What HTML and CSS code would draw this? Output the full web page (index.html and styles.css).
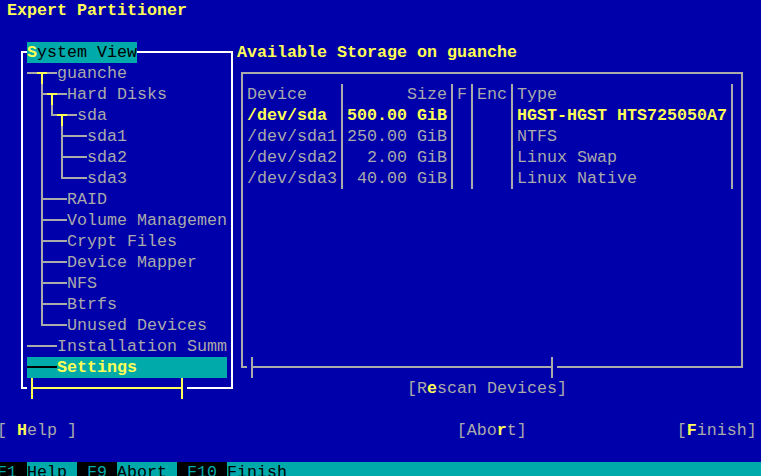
FILE: index.html
```html
<!DOCTYPE html>
<html lang="en">
<head>
<meta charset="utf-8">
<title>Expert Partitioner</title>
<link rel="stylesheet" href="styles.css">
</head>
<body>
<div class="screen">
<div class="row"><span class="c1"></span><b class="y">Expert Partitioner</b></div>
<div class="row"></div>
<div class="main">
<div class="left">
<div class="row"><span class="ind"></span><i class="b tl w"></i><span class="lc"><span class="hl"><b class="y">S</b>ystem View</span><i class="b h w fill"></i></span><i class="b tr w"></i></div>
<div class="row"><span class="ind"></span><i class="b v w"></i><span class="lc"><i class="b h g"></i><i class="b td y"></i><i class="b h g"></i>guanche</span><i class="b v w"></i></div>
<div class="row"><span class="ind"></span><i class="b v w"></i><span class="lc"><span class="c1"></span><i class="b lt g"></i><i class="b td y"></i><i class="b h g"></i>Hard Disks</span><i class="b v w"></i></div>
<div class="row"><span class="ind"></span><i class="b v w"></i><span class="lc"><span class="c1"></span><i class="b v g"></i><i class="b bl g"></i><i class="b td y"></i><i class="b h g"></i>sda</span><i class="b v w"></i></div>
<div class="row"><span class="ind"></span><i class="b v w"></i><span class="lc"><span class="c1"></span><i class="b v g"></i><span class="c1"></span><i class="b lt g"></i><i class="b h g"></i><i class="b h g"></i>sda1</span><i class="b v w"></i></div>
<div class="row"><span class="ind"></span><i class="b v w"></i><span class="lc"><span class="c1"></span><i class="b v g"></i><span class="c1"></span><i class="b lt g"></i><i class="b h g"></i><i class="b h g"></i>sda2</span><i class="b v w"></i></div>
<div class="row"><span class="ind"></span><i class="b v w"></i><span class="lc"><span class="c1"></span><i class="b v g"></i><span class="c1"></span><i class="b bl g"></i><i class="b h g"></i><i class="b h g"></i>sda3</span><i class="b v w"></i></div>
<div class="row"><span class="ind"></span><i class="b v w"></i><span class="lc"><span class="c1"></span><i class="b lt g"></i><i class="b h g"></i><i class="b h g"></i>RAID</span><i class="b v w"></i></div>
<div class="row"><span class="ind"></span><i class="b v w"></i><span class="lc"><span class="c1"></span><i class="b lt g"></i><i class="b h g"></i><i class="b h g"></i>Volume Managemen</span><i class="b v w"></i></div>
<div class="row"><span class="ind"></span><i class="b v w"></i><span class="lc"><span class="c1"></span><i class="b lt g"></i><i class="b h g"></i><i class="b h g"></i>Crypt Files</span><i class="b v w"></i></div>
<div class="row"><span class="ind"></span><i class="b v w"></i><span class="lc"><span class="c1"></span><i class="b lt g"></i><i class="b h g"></i><i class="b h g"></i>Device Mapper</span><i class="b v w"></i></div>
<div class="row"><span class="ind"></span><i class="b v w"></i><span class="lc"><span class="c1"></span><i class="b lt g"></i><i class="b h g"></i><i class="b h g"></i>NFS</span><i class="b v w"></i></div>
<div class="row"><span class="ind"></span><i class="b v w"></i><span class="lc"><span class="c1"></span><i class="b lt g"></i><i class="b h g"></i><i class="b h g"></i>Btrfs</span><i class="b v w"></i></div>
<div class="row"><span class="ind"></span><i class="b v w"></i><span class="lc"><span class="c1"></span><i class="b bl g"></i><i class="b h g"></i><i class="b h g"></i>Unused Devices</span><i class="b v w"></i></div>
<div class="row"><span class="ind"></span><i class="b v w"></i><span class="lc"><i class="b h g"></i><i class="b h g"></i><i class="b h g"></i>Installation Summ</span><i class="b v w"></i></div>
<div class="row"><span class="ind"></span><i class="b v w"></i><span class="lc sel"><i class="b h k"></i><i class="b h k"></i><i class="b h k"></i><b class="y">Settings</b></span><i class="b v w"></i></div>
<div class="row"><span class="ind"></span><i class="b bl w"></i><span class="lc"><i class="b lt y"></i><i class="b h y thumb"></i><i class="b rt y"></i><i class="b h w fill"></i></span><i class="b br w"></i></div>
</div>
<div class="right">
<div class="row"><b class="y">Available Storage on guanche</b></div>
<div class="row"><i class="b tl g"></i><i class="b h g span49"></i><i class="b tr g"></i></div>
<div class="row"><i class="b v g"></i><span class="rc"><span class="c-dev">Device</span><i class="b v g"></i><span class="c-size">Size</span><i class="b v g"></i><span class="c-f">F</span><i class="b v g"></i><span class="c-enc">Enc</span><i class="b v g"></i><span class="c-type">Type</span><i class="b v g"></i></span><i class="b v g"></i></div>
<div class="row"><i class="b v g"></i><span class="rc cur"><span class="c-dev">/dev/sda</span><i class="b v g"></i><span class="c-size">500.00 GiB</span><i class="b v g"></i><span class="c-f"></span><i class="b v g"></i><span class="c-enc"></span><i class="b v g"></i><span class="c-type">HGST-HGST HTS725050A7</span><i class="b v g"></i></span><i class="b v g"></i></div>
<div class="row"><i class="b v g"></i><span class="rc"><span class="c-dev">/dev/sda1</span><i class="b v g"></i><span class="c-size">250.00 GiB</span><i class="b v g"></i><span class="c-f"></span><i class="b v g"></i><span class="c-enc"></span><i class="b v g"></i><span class="c-type">NTFS</span><i class="b v g"></i></span><i class="b v g"></i></div>
<div class="row"><i class="b v g"></i><span class="rc"><span class="c-dev">/dev/sda2</span><i class="b v g"></i><span class="c-size">2.00 GiB</span><i class="b v g"></i><span class="c-f"></span><i class="b v g"></i><span class="c-enc"></span><i class="b v g"></i><span class="c-type">Linux Swap</span><i class="b v g"></i></span><i class="b v g"></i></div>
<div class="row"><i class="b v g"></i><span class="rc"><span class="c-dev">/dev/sda3</span><i class="b v g"></i><span class="c-size">40.00 GiB</span><i class="b v g"></i><span class="c-f"></span><i class="b v g"></i><span class="c-enc"></span><i class="b v g"></i><span class="c-type">Linux Native</span><i class="b v g"></i></span><i class="b v g"></i></div>
<div class="row"><i class="b v g"></i><span class="rc"></span><i class="b v g"></i></div>
<div class="row"><i class="b v g"></i><span class="rc"></span><i class="b v g"></i></div>
<div class="row"><i class="b v g"></i><span class="rc"></span><i class="b v g"></i></div>
<div class="row"><i class="b v g"></i><span class="rc"></span><i class="b v g"></i></div>
<div class="row"><i class="b v g"></i><span class="rc"></span><i class="b v g"></i></div>
<div class="row"><i class="b v g"></i><span class="rc"></span><i class="b v g"></i></div>
<div class="row"><i class="b v g"></i><span class="rc"></span><i class="b v g"></i></div>
<div class="row"><i class="b v g"></i><span class="rc"></span><i class="b v g"></i></div>
<div class="row"><i class="b bl g"></i><span class="rc"><i class="b lt g"></i><i class="b h g sbar"></i><i class="b rt g"></i><i class="b h g fill"></i></span><i class="b br g"></i></div>
<div class="row rescan">[R<b class="y">e</b>scan Devices]</div>
</div>
</div>
<div class="row"></div>
<div class="row">[ <b class="y">H</b>elp ]                                      [Abo<b class="y">r</b>t]               [<b class="y">F</b>inish]</div>
<div class="row"></div>
<div class="row fkeys"><span class="key">F1 </span><span class="lbl">Help </span><span class="key"> F9 </span><span class="lbl">Abort </span><span class="key"> F10 </span><span class="lbl">Finish</span></div>
</div>
</body>
</html>
```
FILE: styles.css
```css
html, body {
  margin: 0;
  padding: 0;
  background: #0000aa;
  overflow: hidden;
  height: 476px;
}

.screen {
  margin-left: -3px;
  font-family: "Liberation Mono", "DejaVu Sans Mono", monospace;
  font-size: 16.664px;
  line-height: 21px;
  color: #aaaaaa;
}

.row {
  display: flex;
  height: 21px;
  white-space: pre;
  overflow: hidden;
}

b { font-weight: bold; }
.y { color: #ffff55; }
.w { color: #ffffff; }
.g { color: #aaaaaa; }
.k { color: #000000; }

.main { display: flex; }
.left { width: 240px; flex: none; }
.right { width: 520px; flex: none; }

.c1 { width: 10px; flex: none; }
.ind { width: 20px; flex: none; }
.lc { width: 200px; flex: none; display: flex; }
.rc { width: 490px; flex: none; display: flex; }

.hl { background: #00aaaa; color: #000000; }
.sel { background: #00aaaa; color: #000000; }

/* box drawing cells: 10 x 21 terminal cells painted with gradients */
.b {
  display: block;
  flex: none;
  width: 10px;
  height: 21px;
  background-repeat: no-repeat;
}
.fill { flex: 1; }
.thumb { width: 140px; }
.sbar { width: 290px; }
.span49 { width: 490px; }

.h {
  background-image: linear-gradient(currentColor, currentColor);
  background-position: 0 9px;
  background-size: 100% 2px;
}
.v {
  background-image: linear-gradient(currentColor, currentColor);
  background-position: 4px 0;
  background-size: 2px 21px;
}
.tl {
  background-image: linear-gradient(currentColor, currentColor), linear-gradient(currentColor, currentColor);
  background-position: 4px 9px, 4px 9px;
  background-size: 6px 2px, 2px 12px;
}
.tr {
  background-image: linear-gradient(currentColor, currentColor), linear-gradient(currentColor, currentColor);
  background-position: 0 9px, 4px 9px;
  background-size: 6px 2px, 2px 12px;
}
.bl {
  background-image: linear-gradient(currentColor, currentColor), linear-gradient(currentColor, currentColor);
  background-position: 4px 9px, 4px 0;
  background-size: 6px 2px, 2px 11px;
}
.br {
  background-image: linear-gradient(currentColor, currentColor), linear-gradient(currentColor, currentColor);
  background-position: 0 9px, 4px 0;
  background-size: 6px 2px, 2px 11px;
}
.lt {
  background-image: linear-gradient(currentColor, currentColor), linear-gradient(currentColor, currentColor);
  background-position: 4px 9px, 4px 0;
  background-size: 6px 2px, 2px 21px;
}
.rt {
  background-image: linear-gradient(currentColor, currentColor), linear-gradient(currentColor, currentColor);
  background-position: 0 9px, 4px 0;
  background-size: 6px 2px, 2px 21px;
}
.td {
  background-image: linear-gradient(currentColor, currentColor), linear-gradient(currentColor, currentColor);
  background-position: 0 9px, 4px 9px;
  background-size: 10px 2px, 2px 12px;
}

/* table columns */
.c-dev { width: 90px; flex: none; }
.c-size { width: 100px; flex: none; text-align: right; }
.c-f { width: 10px; flex: none; }
.c-enc { width: 30px; flex: none; }
.c-type { width: 210px; flex: none; }
.cur .c-dev, .cur .c-size, .cur .c-type { color: #ffff55; font-weight: bold; }

.rescan { padding-left: 170px; }

.fkeys { background: #00aaaa; }
.key { background: #000000; color: #00aaaa; }
.lbl { color: #000000; }
```
